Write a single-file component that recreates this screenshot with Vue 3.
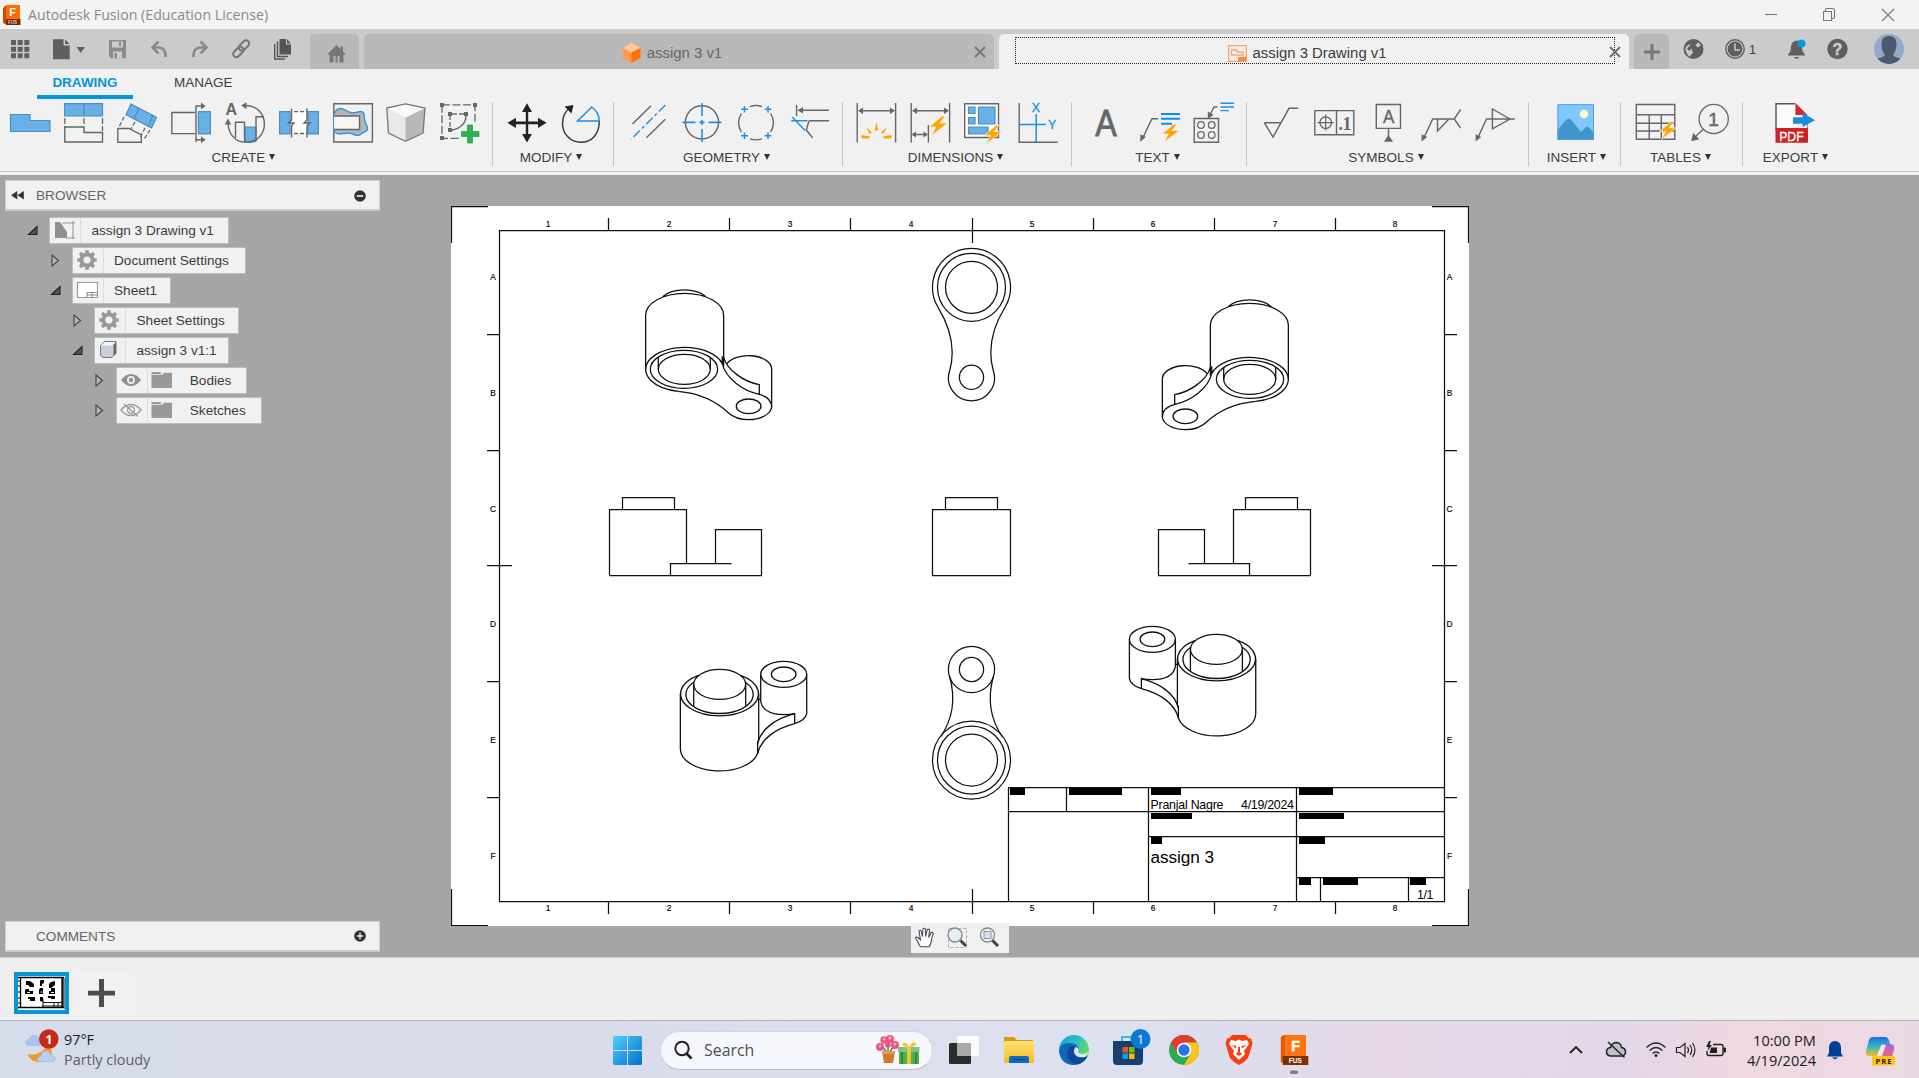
<script setup>
const G = '#666'
const line = (d, c = G, w = 1.4, extra = '') =>
  `<path d="${d}" fill="none" stroke="${c}" stroke-width="${w}" ${extra}/>`
const fill = (d, c = G, extra = '') => `<path d="${d}" fill="${c}" ${extra}/>`
const BLUE = '#69b0e6'
const EDGE = 'stroke="#4a8dc0" stroke-width="1.2"'
const LB = '#1a90ea'
const bolt = (x, y, s = 1) =>
  `<path transform="translate(${x} ${y}) scale(${s})" d="M13 0L0 11H7L2 20L19 7H11L16 0Z" fill="#ffa500" stroke="#f1f1f1" stroke-width=".8"/>`

const groups = [
  {
    name: 'CREATE', width: 493, icons: [
      fill('M.5 11.5H20V17.5H40V28.5H.5Z', BLUE, EDGE),
      fill('M.6 .6H38.5V12.8H.6ZM20 .6V12.8', BLUE, EDGE) + line('M.8 15V25M20 15V23M38.5 15V28', G, 1.3, 'stroke-dasharray="6 2"') + line('M.8 24H20V29.5H38.5V39H.8Z'),
      fill('M14 1L39.5 14.3L34.5 25L9 11.7ZM22 5L17 16M36 12.6L31 23.6', BLUE, EDGE) + line('M.8 25.5H12L24.3 32V39.2H.8Z') + line('M7 14L2.5 23M18 19L14 26M33 27L26.5 37M28 25L23 35', G, 1.3, 'stroke-dasharray="4 2"'),
      line('M24 9.5H.8V30.6H24') + line('M25 39V3H31M25 36.7H31') + fill('M30 -.5L34.5 3L30 6.5ZM30 33.2L34.5 36.7L30 40.2Z') + fill('M27.4 8.6H39.4V30.9H27.4Z', BLUE, EDGE),
      '<text x=".4" y="11.8" font-size="16" font-weight="bold" fill="#666" font-family="Liberation Sans">A</text>' + fill('M20 24H31V38.5L25 39.5L20 38.5Z', BLUE, EDGE) + line('M20 2.6C32 2 39.3 11 39.4 21C39.4 31 32 39.3 21 39.3C10 39.3 3 31 3 19') + line('M10.5 35V19.3H19.5V38.5M31 37V13.7H39') + fill('M16 2.6L21.5 -.8V6ZM3 15.5L-.3 21.5H6.2Z'),
      fill('M.6 8.6H11V30.9H.6ZM29 8.6H39.4V30.9H29Z', BLUE, EDGE) + fill('M14 9H27V30H14Z', '#fff') + line('M15 8.7H28M15 30.5H28', G, 1.3, 'stroke-dasharray="4 2"') + line('M12.5 5.5V17L9.5 20L15 20L12.5 23V34.5M28 5.5V17L25 20H31L28 23V34.5'),
      line('M.8 .8H39.4V39H.8Z') + '<path d="M1 11C5 2 10 6 16 9C22 12 29 5 31 11C32 16 30 16 34 23C36 29 32 28 28 31C24 35 21 30 15 30C9 30 4 33 1 28Z" fill="#b6b6b6" stroke="#2b95e6" stroke-width="1.4"/>' + '<path d="M1 13H26.5V26.5H1" fill="#f6f6f6" stroke="#666" stroke-width="1.4"/>',
      '<path d="M19.5 .8L39 5V29L19.5 38.3L1.5 29L.8 5Z" fill="#e9e9e9"/><path d="M19.5 14.5L39 5L37 30L19.5 38.3Z" fill="#b9b9b9"/><path d="M19.5 .8L39 5L19.5 14.5L.8 5Z" fill="#fafafa"/>' + line('M19.5 .8L39 5L37 30L19.5 38.3L2.5 30L.8 5Z', '#777', 1.3),
      line('M2 1.8H35V20M2 1.8V35.3H21', G, 1.3, 'stroke-dasharray="8 2.5"') + fill('M0 0H4V4H0ZM33 0H37V4H33ZM0 33H4V37H0ZM8 9H12V13H8ZM24 9H28V13H24ZM8 25H12V29H8Z') + line('M10 12V26M12 11H24', G, 1.3, 'stroke-dasharray="5 2"') + line('M26 13C26 20 20 26 12 27', G) + fill('M27.5 22H32.5V28.5H39V33.5H32.5V40H27.5V33.5H21.500V28.5H27.5Z', '#29b34e', 'stroke="#1f9c40" stroke-width=".7"'),
    ],
  },
  {
    name: 'MODIFY', width: 121, icons: [
      fill('M20 .3L25 9H21.2V18.5H31V14.7L39.6 19.8L31 25V21.2H21.2V31H25L20 39.6L15 31H18.8V21.2H9V25L.4 19.8L9 14.7V18.5H18.8V9H15Z', '#222'),
      line('M10 4.5C4 8 1.5 14 1.5 20.5C1.5 31 9.5 39.3 20 39.3C30.5 39.3 38.3 31.5 38.3 18', '#333', 1.4) + fill('M12.5 2L3.5 3.5L10.5 10.5Z', '#222') + line('M30.8 4L16.5 18H38.3C38 11.5 35 7 30.8 4Z', LB, 1.5),
    ],
  },
  {
    name: 'GEOMETRY', width: 229, icons: [
      line('M24 2.7L5.5 21M38.3 16.3L19.4 34.7') + line('M38.3 2L4.2 36.3', LB, 1.4, 'stroke-dasharray="9 3 3 3"'),
      line('M21 2.8A16.6 16.6 0 1 1 20.9 2.8Z') + line('M21 0V13M21 26V39M1.5 19.4H14.5M27.5 19.4H40.5M21 17V22M18.5 19.4H23.5', LB, 1.6),
      line('M15 3.6A17.3 17.3 0 0 1 27 3.6M35.6 10.5A17.5 17.5 0 0 1 35.6 29M27 35.8A17.3 17.3 0 0 1 15 35.8M6.4 29A17.5 17.5 0 0 1 6.4 10.5') + line('M9.5 3V9.6M6 6.3H13M33 3V9.6M29.6 6.3H36.4M9.5 29.4V36M6 32.7H13M33 29.4V36M29.6 32.7H36.4', LB, 1.5),
      line('M7.6 2V13.3M10 7.3H40M20 17.7H40M20 17.7L17.3 27L23.6 34.7') + fill('M8.6 7.3L14 4V10.6Z') + line('M2.2 17.7H18.5M3.2 14L16 27.5', LB, 1.4),
    ],
  },
  {
    name: 'DIMENSIONS', width: 229, icons: [
      line('M1.2 0V39.5M39.6 0V39.5M4 7.7H37') + fill('M2 7.7L7 4.4V11ZM39 7.7L34 4.4V11Z') + fill('M20.5 19L22.3 27.5H18.7ZM10 24L16 29.5L13.5 31ZM31 24L25 29.5L27.5 31ZM5.5 32L14 33.4L13 35.5H5.5ZM35.5 32L27 33.4L28 35.5H35.5Z', '#ffa500'),
      line('M1.2 0V39.5M39.6 0V39.5M18.4 22V39.5M4 7.7H37M4 31.5H16') + fill('M2 7.7L7 4.4V11ZM39 7.7L34 4.4V11ZM1.5 31.5L6 28.5V34.5ZM18 31.5L13.5 28.5V34.5Z') + bolt(19, 13),
      '<path d="M.7 .7H34.5V34.5H.7Z" fill="#fff" stroke="#666" stroke-width="1.4"/>' + fill('M4.5 4H11V10.5H4.5ZM14.5 4H31V21H14.5ZM4.5 14.5H11V21H4.5ZM4.5 24H24V31H4.5Z', BLUE, EDGE) + bolt(20, 22, .95),
      line('M1.2 0V39.2H39.6') + line('M18.2 11V39M1.5 21.5H28', LB, 1.5) + '<text x="13.8" y="9" font-size="12.5" fill="#1a90ea" stroke="#1a90ea" stroke-width=".3" font-family="Liberation Sans">X</text><text x="30" y="26" font-size="12.5" fill="#1a90ea" stroke="#1a90ea" stroke-width=".3" font-family="Liberation Sans">Y</text>',
    ],
  },
  {
    name: 'TEXT', width: 175, icons: [
      '<text x="10.2" y="33.2" font-size="36" textLength="21.5" lengthAdjust="spacingAndGlyphs" fill="#666" stroke="#666" stroke-width=".8" font-family="Liberation Sans">A</text>',
      line('M19 15.7H13L4 34.5') + fill('M1.3 38.7V31.2L6.8 34Z') + line('M22 11H41M22 15.7H41M22 20.8H33', '#0a90f0', 2) + bolt(23, 21, .92),
      line('M1.2 15.5H25.5V39.2H1.2Z') + [[8, 22], [18.7, 22], [8, 32], [18.7, 32]].map(([x, y]) => `<circle cx="${x}" cy="${y}" r="3.3" fill="none" stroke="#666" stroke-width="1.3"/>`).join('') + line('M24.5 4H21L17.5 11') + fill('M14.8 15.8V8.5L20.5 12Z') + line('M27.5 0.2H41M27.5 4H41M27.5 7.6H36', LB, 1.4),
    ],
  },
  {
    name: 'SYMBOLS', width: 282, icons: [
      line('M4.3 19.7H21.4M4.3 19.7L13 34L29 5.3H38.3'),
      line('M.8 7.6H39.8V31.8H.8ZM22.5 7.6V31.8') + '<circle cx="11.7" cy="19.6" r="5.8" fill="none" stroke="#666" stroke-width="1.3"/>' + line('M11.7 11.5V27.5M3.6 19.6H19.8', G, 1.2) + '<text x="24.6" y="26.5" font-size="18" font-weight="bold" textLength="13" fill="#666" font-family="Liberation Serif">.1</text>',
      line('M8.3 1.5H32.5V25.4H8.3ZM20.5 25.4V33') + fill('M20.5 32L25 38.7H16Z') + '<text x="15" y="20.4" font-size="19" textLength="11.3" lengthAdjust="spacingAndGlyphs" fill="#666" stroke="#666" stroke-width=".4" font-family="Liberation Sans">A</text>',
      line('M2.8 35L11.7 16H33.3L39.6 6.5M33.3 16L39.6 25.2M16.5 16V28L28 16') + fill('M.6 38.5V31.2L6.2 34Z'),
      line('M2.8 35L11.5 16H39.8M17.4 6L35 16L17.4 25.8Z') + fill('M.6 38.5V31.2L6.2 34Z'),
    ],
  },
  {
    name: 'INSERT', width: 92, icons: [
      fill('M1.5 1.2H38V36.8H1.5Z', '#80c8ff') + '<circle cx="28" cy="11" r="4.2" fill="#fdfdd8" stroke="#e8e8a0" stroke-width=".6"/>' + fill('M1.5 27L10 17Q12.8 14.5 15.5 17L25 29L29.5 24.5Q31.5 23 33.5 25L38 30V36.8H1.5Z', '#4095cf') + line('M2 1.7H37.5V36.3H2Z', '#4e9fd6', 1),
    ],
  },
  {
    name: 'TABLES', width: 122, icons: [
      line('M1.3 1.5H39.8V36.3H1.3ZM1.3 11.7H39.8M1.3 20.3H39.8M1.3 28H39.8M14.2 11.7V36.3M26.3 11.7V36.3') + bolt(24.5, 18.5, .9),
      '<circle cx="24.7" cy="16" r="14.6" fill="none" stroke="#666" stroke-width="1.3"/>' + line('M14.5 26L6 34') + fill('M2.3 38.3L4 30L10.3 36.3Z') + '<text x="19.3" y="23" font-size="19" fill="#666" stroke="#666" stroke-width=".5" font-family="Liberation Sans">1</text>',
    ],
  },
  {
    name: 'EXPORT', width: 101, icons: [
      '<path d="M2 .7H21V26H2Z" fill="#fbfbfb"/>' + line('M2 27V.7H21', '#555', 1.4) + fill('M21.5 0L33.5 12H21.5Z', '#d2282a') + fill('M1.5 25H34V39.7H1.5Z', '#cf2226') + line('M33.5 20V25', '#999', 1.2) + fill('M19 14.2H28.5V9.4L41 17.2L28.5 24V20.8H19Z', '#1a8de0') + '<text x="5.2" y="37.5" font-size="13.5" textLength="24.5" lengthAdjust="spacingAndGlyphs" fill="#fff" stroke="#fff" stroke-width=".3" font-family="Liberation Sans">PDF</text>',
    ],
  },
]

const tree = [
  { label: 'assign 3 Drawing v1', indent: 50, width: 177.5, open: true, icons: ['drawing'] },
  { label: 'Document Settings', indent: 72.5, width: 172.3, open: false, icons: ['gear'] },
  { label: 'Sheet1', indent: 72.5, width: 97.3, open: true, icons: ['sheet'] },
  { label: 'Sheet Settings', indent: 95, width: 142.5, open: false, icons: ['gear'] },
  { label: 'assign 3 v1:1', indent: 95, width: 132.5, open: true, icons: ['body'] },
  { label: 'Bodies', indent: 117.3, width: 128.5, open: false, icons: ['eye', 'folder'] },
  { label: 'Sketches', indent: 117.3, width: 143.7, open: false, icons: ['hidden', 'folder'] },
]

const treeIcons = {
  drawing: '<path d="M2 2H7L14 12V18H2Z" fill="#8e9093"/><path d="M9 3H22M20 1V19M13 18H22" fill="none" stroke="#999" stroke-width="1.1"/>',
  gear: '<circle cx="11" cy="10" r="5.6" fill="none" stroke="#999" stroke-width="4"/><path d="M11 .3V4M11 16V19.7M1.3 10H5M17 10H20.7M4.1 3.1L6.8 5.8M15.2 14.2L17.9 16.9M17.9 3.1L15.2 5.8M6.8 14.2L4.1 16.9" stroke="#999" stroke-width="3.6" fill="none"/>',
  sheet: '<path d="M1.5 2.5H21.5V17.5H1.5Z" fill="#fff" stroke="#999" stroke-width="1.2"/><path d="M11 17V12.5H21M11 15H21M16 12.5V17" stroke="#888" fill="none"/>',
  body: '<path d="M2.5 5.5L6.5 1.5H18V13.5L14 17.5H5L2.5 15.5Z" fill="#c9cedb" stroke="#777" stroke-width="1"/><path d="M3 5.5L6.5 2H17.5L14 5.5Z" fill="#f4f6fb"/><path d="M15.500 5L18 2V13L15.500 16Z" fill="#63666c"/>',
  eye: '<path d="M1 10Q5.5 4 11 4T21 10Q16.5 16 11 16T1 10Z" fill="#8f8f8f"/><circle cx="11" cy="10" r="3.9" fill="#f1f1f1"/><circle cx="11" cy="10" r="2.2" fill="#8f8f8f"/>',
  hidden: '<path d="M1 10Q5.5 4.5 11 4.5T21 10Q16.5 15.5 11 15.5T1 10Z" fill="none" stroke="#999" stroke-width="1.3"/><circle cx="11" cy="10" r="3.4" fill="none" stroke="#999" stroke-width="1.2"/><path d="M4 4L18 16.5" stroke="#999" stroke-width="1.3"/>',
  folder: '<path d="M.5 2H9L11 4.2H.5ZM.5 5H11L13 2.8H21V18H.5Z" fill="#999"/>',
}

const cols = [[548, 1], [669, 2], [790, 3], [911, 4], [1032, 5], [1153, 6], [1275, 7], [1395, 8]]
const rows = [[277, 'A'], [393, 'B'], [509, 'C'], [624, 'D'], [740, 'E'], [856, 'F']]
const fieldLabels = [
  [1010, 788, 15, 7], [1069, 788, 53, 7], [1151, 788, 30, 7], [1299, 788, 34, 7],
  [1151, 813, 41, 6], [1299, 813, 45, 6], [1151, 837, 11, 7], [1299, 837, 26, 7],
  [1299, 878, 12, 7], [1323, 878, 35, 7], [1410, 878, 16, 7],
]
</script>

<template>
  <div class="app">
    <header class="titlebar">
      <svg class="logo" width="18" height="20" viewBox="0 0 18 20">
        <path d="M1 1.5L4 0H17V20L4 19L0 18Z" fill="#ff6b00" />
        <path d="M0 3L3 1V19L0 18Z" fill="#c74d00" />
        <path d="M3 14H17.5V20H3Z" fill="#6b2c00" />
        <text x="6.2" y="11" font-size="11" font-weight="bold" fill="#fff" font-family="Liberation Sans">F</text>
        <text x="5" y="18.8" font-size="4.5" font-weight="bold" fill="#e8c8b0" font-family="Liberation Sans">FUS</text>
      </svg>
      <span class="title">Autodesk Fusion (Education License)</span>
      <svg class="wincontrols" width="132" height="16" viewBox="0 0 132 16" fill="none" stroke="#777" stroke-width="1.1">
        <path d="M0 7.5H12" />
        <path d="M58.5 4.5H66.5V13.5H58.5ZM60.5 4.5V2.5Q60.5 1.5 62 1.5H67.5Q69.5 1.5 69.5 3.5V10Q69.5 11.5 68 11.5H66.5" />
        <path d="M117 2L129 14M129 2L117 14" />
      </svg>
    </header>

    <nav class="tabbar">
      <svg class="quick" width="310" height="40" viewBox="0 29 310 40">
        <path d="M11 40H16V45H11ZM17.7 40H22.7V45H17.7ZM24.3 40H29.3V45H24.3ZM11 46.7H16V51.7H11ZM17.7 46.7H22.7V51.7H17.7ZM24.3 46.7H29.3V51.7H24.3ZM11 53.3H16V58.3H11ZM17.7 53.3H22.7V58.3H17.7ZM24.3 53.3H29.3V58.3H24.3Z" fill="#5f5f5f" />
        <path d="M53 39.3H63.5V45.5H69.7V59.3H53ZM65 39.3L69.7 44H65Z" fill="#5f5f5f" />
        <path d="M76.5 47H85L80.7 53Z" fill="#5f5f5f" />
        <path d="M109 40H126V58.3H111L109 56Z" fill="#8b8b8b" />
        <path d="M112 41.5H123V47.5H112ZM113 51.5H122V58H113Z" fill="#ccc" />
        <path d="M119 42H121V46H119ZM114.5 53H117V58H114.5Z" fill="#8b8b8b" />
        <g fill="none" stroke="#8b8b8b" stroke-width="2.6">
          <path d="M158.5 41.5L152.5 47.5L158.5 53.5M153 47.5H159Q166 48 165.5 57" />
          <path d="M200.5 41.5L206.5 47.5L200.5 53.5M206 47.5H200Q193 48 193.5 57" />
        </g>
        <g fill="none" stroke="#777" stroke-width="2">
          <rect x="-6" y="-3.2" width="12" height="6.4" rx="3.2" transform="translate(244 45.5) rotate(-45)" />
          <rect x="-6" y="-3.2" width="12" height="6.4" rx="3.2" transform="translate(238.3 52) rotate(-45)" />
        </g>
        <path d="M279.5 39H286V44.5H291V54.5H279.5ZM287 39L291 43.5H287Z" fill="#555" />
        <path d="M277.5 41.5V56.5H288M274.7 44V59H285" fill="none" stroke="#555" stroke-width="1.4" />
      </svg>
      <div class="tab home">
        <svg width="20" height="18" viewBox="0 0 20 18"><path d="M0 9.5L9.5 0L13.5 4V1.5H16V6.5L19 9.5H16.5V17.5H12.5V11H10.5V17.5H8.5V11H6.5V17.5H2.5V9.5Z" fill="#777" /></svg>
      </div>
      <div class="tab doc">
        <svg width="19" height="20" viewBox="0 0 19 20"><path d="M9.5 0L18.5 5V15L9.5 20L.5 15V5Z" fill="#ff9a4d" /><path d="M9.5 0L18.5 5L9.5 9.5L.5 5Z" fill="#ffc79c" /><path d="M18.5 5V15L9.5 20V9.5Z" fill="#ff7010" /></svg>
        <span>assign 3 v1</span>
        <svg class="close" width="12" height="12" viewBox="0 0 12 12"><path d="M1 1L11 11M11 1L1 11" stroke="#777" stroke-width="1.9" /></svg>
      </div>
      <div class="tab doc active">
        <div class="focus">
          <svg width="19" height="17" viewBox="0 0 19 17"><path d="M.7 .7H18.3V16.3H.7Z" fill="none" stroke="#f9a56b" stroke-width="1.3" /><path d="M3.5 5H9V7H15V10H3.5Z" fill="none" stroke="#f9a56b" stroke-width="1.3" /><path d="M10 12H18.5V16.5H10Z" fill="#ff8b3d" /></svg>
          <span>assign 3 Drawing v1</span>
        </div>
        <svg class="close" width="12" height="12" viewBox="0 0 12 12"><path d="M1 1L11 11M11 1L1 11" stroke="#707070" stroke-width="1.9" /></svg>
      </div>
      <div class="tab plus"><svg width="16" height="16" viewBox="0 0 16 16"><path d="M6.5 0H9.5V6.5H16V9.5H9.5V16H6.5V9.5H0V6.5H6.5Z" fill="#777" /></svg></div>
      <svg class="status" width="250" height="40" viewBox="1669 29 250 40">
        <circle cx="1693.5" cy="49" r="9" fill="none" stroke="#5f5f5f" stroke-width="2" />
        <path d="M1684 49A9.500 9.500 0 0 1 1693.500 39.500L1699 41.500L1695.500 45L1697.500 47.500L1702.500 44.500L1703 49A9.500 9.500 0 0 1 1698 57.500L1691 58.300L1688 56L1692 51.500V48.500L1689 51L1687 48.500L1691 44.500L1688 45Z" fill="#5f5f5f" />
        <path d="M1688.500 56L1692.500 51.500" stroke="#ccc" stroke-width="2.200" />
        <circle cx="1735" cy="49" r="9.2" fill="none" stroke="#5f5f5f" stroke-width="1.4" />
        <circle cx="1735" cy="49" r="7.4" fill="#5f5f5f" />
        <path d="M1735 43.5V50H1740" fill="none" stroke="#ccc" stroke-width="1.5" />
        <text x="1748.8" y="54" font-size="13.5" fill="#444" font-family="Liberation Sans">1</text>
        <path d="M1788 54.5Q1791 52 1791 46.5Q1791.5 41.5 1796.5 40.5Q1801.5 41.5 1802 46.5Q1802 52 1805 54.5V55.5H1788ZM1793.5 57H1799.5Q1796.5 60.5 1793.5 57Z" fill="#5f5f5f" />
        <circle cx="1801.5" cy="43.5" r="4" fill="#0a96e0" />
        <circle cx="1837.5" cy="49" r="10.2" fill="#5f5f5f" />
        <text x="1832.600" y="55" font-size="16" font-weight="bold" fill="#ccc" stroke="#ccc" stroke-width=".5" font-family="Liberation Sans">?</text>
        <clipPath id="avatar"><circle cx="1889" cy="49" r="15" /></clipPath>
        <g clip-path="url(#avatar)">
          <path d="M1874 34H1904V64H1874Z" fill="#93a7c6" />
          <path d="M1889 36Q1897 36 1896.5 45Q1895.5 53 1893 54.5Q1894 57.5 1901 58.5V65H1877V58.5Q1884 57.5 1885 54.5Q1882 52 1881.5 45Q1881 36 1889 36Z" fill="#4c5a70" />
        </g>
      </svg>
    </nav>

    <section class="ribbon">
      <div class="ribbon-tabs"><b>DRAWING</b><span>MANAGE</span></div>
      <div class="groups">
        <div v-for="g in groups" :key="g.name" class="group" :class="g.name.toLowerCase()" :style="{ width: g.width + 'px' }">
          <div class="icons">
            <svg v-for="(icon, i) in g.icons" :key="i" width="40" height="40" viewBox="0 0 40 40" v-html="icon" />
          </div>
          <div class="label">{{ g.name }}<i></i></div>
        </div>
      </div>
    </section>

    <main class="workspace">
      <aside>
        <div>
          <div class="panel">
            <svg width="13" height="9" viewBox="0 0 13 9"><path d="M6.3 0V8.5L0 4.3ZM12.8 0V8.5L6.5 4.3Z" fill="#333" /></svg>
            <span>BROWSER</span>
            <svg class="toggle" width="12" height="12" viewBox="0 0 12 12"><circle cx="6" cy="6" r="5.8" fill="#333" /><path d="M2.8 6H9.2" stroke="#f1f1f1" stroke-width="1.7" /></svg>
          </div>
          <ul class="tree">
            <li v-for="n in tree" :key="n.label" :style="{ paddingLeft: n.indent - 28 + 'px' }">
              <svg class="arrow" width="11" height="13" viewBox="0 0 11 13">
                <path v-if="n.open" d="M10 2.5V10.5H1.500Z" fill="#555" stroke="#222" stroke-width="1.1" />
                <path v-else d="M2 1L8.5 6.5L2 12Z" fill="#b4b4b4" stroke="#444" stroke-width="1.1" />
              </svg>
              <div class="node" :style="{ width: n.width + 'px' }">
                <span v-for="(ic, k) in n.icons" :key="k" class="cell"><svg width="22" height="20" viewBox="0 0 22 20" v-html="treeIcons[ic]" /></span>
                <span class="name">{{ n.label }}</span>
              </div>
            </li>
          </ul>
        </div>
        <div class="panel comments">
          <span>COMMENTS</span>
          <svg class="toggle" width="12" height="12" viewBox="0 0 12 12"><circle cx="6" cy="6" r="5.8" fill="#333" /><path d="M2.8 6H9.2M6 2.8V9.2" stroke="#f1f1f1" stroke-width="1.5" /></svg>
        </div>
      </aside>

      <svg class="sheet" width="1018" height="720" viewBox="451 206 1018 720" fill="none" stroke="#111" stroke-width="1.25">
        <defs>
          <g id="iso-below" transform="scale(.33333) translate(-733 0)" stroke-width="3.9">
            <path d="M617 523V361A117 66 0 0 1 851 361V512M668 305A78 45 0 0 1 798 305" />
            <path d="M715 589Q660 584 632 556Q617 540 617 523A117 66 0 0 1 847 506V484" />
            <path d="M847 506C858 552 910 588 958 598V569C910 560 862 525 851 487" />
            <path d="M958 598Q995 608 995 636A70 40 0 0 1 925 674Q888 674 866 654C830 620 785 595 715 589" />
            <ellipse cx="732" cy="523" rx="101" ry="57" />
            <ellipse cx="733" cy="523" rx="78" ry="45" />
            <ellipse cx="926" cy="634" rx="37" ry="22" />
            <path d="M655 487V523M811 487V523M860 507A70 40 0 0 1 995 520V636" />
          </g>
          <g id="iso-above" transform="scale(.33333) translate(-839 0)" stroke-width="3.9">
            <ellipse cx="839" cy="373" rx="78" ry="45" />
            <path d="M775 346A117 66 0 1 0 902 346M761 367A101 57 0 1 0 916 367" />
            <path d="M761 373V438M917 373V438M721 403V567A117 66 0 0 0 953 579M956 403V540L953 545V580M956 418H962" />
            <ellipse cx="1031" cy="343" rx="69" ry="39" />
            <ellipse cx="1031" cy="343" rx="37" ry="22" />
            <path d="M962 343V425Q970 464 1031 464Q1048 464 1064 461V491M1100 343V461Q1096 481 1064 491" />
            <path d="M953 550C963 505 1010 475 1064 461M953 580C963 535 1010 505 1064 491" />
          </g>
          <path id="side" d="M609.5 575.5V509.5H686.5V563.5M622.5 509.5V497.5H674.5V509.5M715.5 563.5V529.5H761.5V575.5H609.5M670.5 575.5V563.5H731.5" />
        </defs>
        <path d="M451.5 243V206.5H488M1432 206.5H1468.5V243M451.5 889V925.5H488M1432 925.5H1468.5V889" />
        <path d="M499.5 230.5H1444.5V901.5H499.5Z" />
        <path d="M608.5 218V230M729.5 218V230M850.5 218V230M972.5 218V243M1093.5 218V230M1214.5 218V230M1335.5 218V230" />
        <path d="M608.5 902V914M729.5 902V914M850.5 902V914M972.5 889V914M1093.5 902V914M1214.5 902V914M1335.5 902V914" />
        <path d="M487 334.5H499M487 450.5H499M487 565.5H512M487 681.5H499M487 797.5H499" />
        <path d="M1445 334.5H1457M1445 450.5H1457M1432 565.5H1457M1445 681.5H1457M1445 797.5H1457" />
        <g class="zones">
          <text v-for="c in cols" :key="'t' + c[1]" :x="c[0]" y="227.2">{{ c[1] }}</text>
          <text v-for="c in cols" :key="'b' + c[1]" :x="c[0]" y="911.2">{{ c[1] }}</text>
          <text v-for="r in rows" :key="'l' + r[1]" x="493" :y="r[0] + 3">{{ r[1] }}</text>
          <text v-for="r in rows" :key="'r' + r[1]" x="1449.6" :y="r[0] + 3">{{ r[1] }}</text>
        </g>

        <use href="#iso-below" transform="translate(684.3 195)" />
        <use href="#iso-below" transform="translate(1249.7 205) scale(-1 1)" />
        <use href="#iso-above" transform="translate(719.7 560)" />
        <use href="#iso-above" transform="translate(1216.4 525) scale(-1 1)" />
        <use href="#side" />
        <use href="#side" transform="translate(1920 0) scale(-1 1)" />
        <path d="M932.5 509.5H1010.5V575.5H932.5ZM945.5 509.5V497.5H997.5V509.5" />

        <g transform="translate(971.5 287.3)">
          <path d="M-33.5 20A39 39 0 1 1 33.5 20C20 42 16 62 21.7 83A23 23 0 1 1 -21.7 83C-16 62 -20 42 -33.5 20Z" />
          <circle r="34" /><circle r="26" /><circle cy="90" r="12.1" />
        </g>
        <g transform="translate(971.5 760)">
          <circle r="39" /><circle r="34" /><circle r="26" />
          <circle cy="-90.5" r="23.1" /><circle cy="-90.5" r="12.1" />
          <path d="M-21.7 -83C-16 -62 -18 -42 -31 -23M21.7 -83C16 -62 18 -42 31 -23" />
        </g>

        <path d="M1008.5 901.5V787.5H1444.5M1066.5 787.5V811.5M1008.5 811.5H1444.5M1148.5 787.5V901.5M1296.5 787.5V901.5M1148.5 836.5H1444.5M1296.5 877.5H1444.5M1320.5 877.5V901.5M1408.5 877.5V901.5" />
        <g fill="#000" stroke="none">
          <rect v-for="(f, i) in fieldLabels" :key="i" :x="f[0]" :y="f[1]" :width="f[2]" :height="f[3]" />
        </g>
        <g class="fields">
          <text x="1150.5" y="809" textLength="73">Pranjal Nagre</text>
          <text x="1241" y="809" textLength="53">4/19/2024</text>
          <text class="big" x="1150.500" y="862.7" textLength="63.5">assign 3</text>
          <text x="1417" y="898.7" textLength="16.5">1/1</text>
        </g>
      </svg>

      <div class="navtools">
        <svg width="98" height="30" viewBox="0 0 98 30" fill="none">
          <path d="M8.5 22.5Q7.5 19 4.5 15Q5 13.5 7 14.5L9.5 17L8 8Q9 6.5 10.2 8L11.5 13.5L12 6Q13.3 4.5 14.5 6L14.7 13.5L16.3 6.5Q17.8 5.5 18.6 7L17.7 14.5L20.3 9.5Q21.8 9 22.3 10.5Q20.5 15 20.5 18Q19.5 21.5 18.2 23.8H10Z" fill="#fff" stroke="#444c5a" stroke-width="1.1" />
          <path d="M37.5 5.5H55.5V24.5H37.5Z" stroke="#aaa" stroke-dasharray="3 2" />
          <circle cx="44" cy="12" r="7" fill="#e4eff1" stroke="#888" stroke-width="1.3" /><path d="M49.5 17.5L55 23" stroke="#444" stroke-width="3" />
          <circle cx="76.5" cy="12" r="7" fill="#eef2f5" stroke="#888" stroke-width="1.3" /><path d="M73 8.5H80V15.5H73Z" fill="#dde1ee" stroke="#8890a8" /><path d="M81.500 17.500L87 23" stroke="#444" stroke-width="3" />
        </svg>
      </div>
    </main>

    <section class="sheets">
      <div class="thumb">
        <svg width="47" height="34" viewBox="0 0 47 34">
          <path d="M0 0H47V34H0Z" fill="#fff" />
          <path d="M0 1.5H46M2.5 1V32M0 31.5H46" stroke="#000" stroke-width="1.3" />
          <path d="M0 5H2M0 10H2M0 16H2M0 22H2M0 27H2" stroke="#000" />
          <path d="M44.5 2V31" stroke="#111" stroke-width="2.400" /><path d="M46.5 2V33" stroke="#888" />
          <path d="M8 5H12L16 8V11H12L10 9H8ZM23 4H26V7L24 8V10H22V5ZM33 6L37 5V9L33 12H31V8ZM8 13H11V15H15V18H7V14ZM22 12H25V18H21V14ZM33 12H37V18H31V15H33ZM10 21H17V25H12V23H10ZM22 21H25V26L22 25ZM30 20H37V23H33V22H30Z" fill="#000" />
          <path d="M9 16.500H12M22.500 16H24.500M33 16.5H36" stroke="#fff" stroke-width="1.2" />
          <path d="M25 26.5H44M25 23V31M36 26.5V31M24 30H44M40 27V31" stroke="#111" stroke-width="1" />
        </svg>
      </div>
      <div class="addsheet"><svg width="27" height="28" viewBox="0 0 27 28"><path d="M11 0H16V11.7H27V16.5H16V28H11V16.5H0V11.7H11Z" fill="#4d4d4d" /></svg></div>
    </section>

    <footer class="taskbar">
      <svg class="weather" width="35" height="38" viewBox="25 1027 35 38">
        <path d="M27.5 1053Q39 1056 47 1045Q54 1048 51 1055Q46 1061.500 38 1061Q30 1060 27.5 1053Z" fill="#f39a2b" />
        <path d="M28 1045Q24 1043 26 1040Q27 1038 29 1038Q30 1034 34 1034Q38 1034 40 1038V1045Z" fill="#a9c2ee" />
        <path d="M40 1060.500Q36 1060 38 1056.5Q39 1055 41 1055Q42 1050 46 1050Q50 1050 51 1054.5Q55 1055 55 1057.500Q55 1060.500 52 1060.500Z" fill="#b9cff5" stroke="#91aee6" stroke-width=".6" />
        <circle cx="48.8" cy="1038" r="9.8" fill="#c42b1c" />
        <text x="45.5" y="1042.5" font-size="12" font-weight="bold" fill="#fff" font-family="Open Sans, sans-serif">1</text>
      </svg>
      <div class="temp"><span>97°F</span><em>Partly cloudy</em></div>

      <svg class="start" width="29" height="29" viewBox="0 0 29 29">
        <defs><linearGradient id="win" x2="1" y2="1"><stop offset="0" stop-color="#4fd0ff" /><stop offset="1" stop-color="#0070c8" /></linearGradient></defs>
        <path d="M1 0H14V14H0V1ZM15 0H28L29 1V14H15ZM0 15H14V29H1L0 28ZM15 15H29V28L28 29H15Z" fill="url(#win)" />
      </svg>
      <div class="search">
        <svg width="20" height="20" viewBox="0 0 20 20" fill="none" stroke="#222" stroke-width="2"><circle cx="9" cy="8.5" r="6.7" /><path d="M13.5 13.5L18.5 18.5" stroke-width="2.6" /></svg>
        <span>Search</span>
        <svg class="gift" width="44" height="30" viewBox="0 0 44 30">
          <path d="M11 18L5 9M12 18V6M13 18L19 9" stroke="#3c8a3c" stroke-width="1.5" />
          <g fill="#e8557f"><circle cx="8" cy="5" r="3.7" /><circle cx="14" cy="4" r="4" /><circle cx="4" cy="12" r="4" /><circle cx="19" cy="10" r="4" /><circle cx="12" cy="10" r="2.8" /></g>
          <g fill="#f9a8c0"><circle cx="8" cy="4" r="1.5" /><circle cx="14" cy="3" r="1.7" /><circle cx="4" cy="11" r="1.5" /><circle cx="19" cy="9" r="1.5" /></g>
          <path d="M6 16H19L17 28H8Z" fill="#d07830" /><path d="M6 16H19V19H6.5Z" fill="#e89850" />
          <path d="M23 14H43V29H23Z" fill="#4caf50" /><path d="M22 12H43.5V17H22Z" fill="#7bc67e" />
          <path d="M26 17V29M40 17V29" stroke="#2e8b3a" stroke-width="2" />
          <path d="M31 12H35V29H31ZM33 12Q24 11 27 8Q31 7 33 12Q36 6 40 8Q41 12 33 12Z" fill="#f4c430" />
        </svg>
      </div>

      <svg class="apps" width="380" height="58" viewBox="940 1020 380 58">
        <defs>
          <linearGradient id="fold" x2="0" y2="1"><stop offset="0" stop-color="#ffe27a" /><stop offset="1" stop-color="#fbb91a" /></linearGradient>
          <linearGradient id="edge" x1="0" y1="0" x2="1" y2=".4"><stop offset="0" stop-color="#1a9fe0" /><stop offset=".6" stop-color="#2ac0c0" /><stop offset="1" stop-color="#66dd60" /></linearGradient>
        </defs>
        <rect x="949" y="1043" width="22" height="21" rx="1.5" fill="#2b2b2b" />
        <rect x="957" y="1036" width="22" height="20" rx="1.5" fill="#fff" opacity=".85" />
        <path d="M957 1043H971V1056H957Z" fill="#aaa" />
        <path d="M1004 1038Q1004 1037 1005 1037H1014L1017 1040H1033V1046H1004Z" fill="#dc9a08" />
        <rect x="1004" y="1041" width="30" height="22" rx="1.5" fill="url(#fold)" />
        <path d="M1009 1063V1058Q1009 1056 1011 1056H1027Q1029 1056 1029 1058V1063Z" fill="#0f6cbd" /><path d="M1013 1059.5H1025" stroke="#0a4a85" stroke-width="1.3" />
        <circle cx="1074" cy="1050" r="15" fill="url(#edge)" />
        <path d="M1059 1050Q1061 1043 1069 1043Q1078 1043 1079 1050Q1078 1054 1080 1056Q1085 1058 1087.5 1056Q1083 1065 1073 1065Q1060 1064 1059 1050Z" fill="#1266b8" />
        <path d="M1067 1053Q1068 1064 1078 1064.3Q1085 1062 1087.5 1056Q1081 1059 1076 1056Q1072 1052 1075 1046Q1068 1045 1067 1053Z" fill="#0b4a94" />
        <path d="M1075.5 1047Q1072 1052 1076.5 1056Q1079 1058 1085 1057L1089 1052Q1080 1056 1078.5 1052Q1080 1048 1075.5 1047Z" fill="#e0e4f0" />
        <path d="M1122 1043V1037H1134V1043" fill="none" stroke="#38b8e8" stroke-width="2" />
        <path d="M1113 1041H1143V1061Q1143 1065 1139 1065H1117Q1113 1065 1113 1061Z" fill="#17406f" />
        <path d="M1122.5 1047H1128V1052.5H1122.5Z" fill="#f25022" /><path d="M1129 1047H1134.5V1052.5H1129Z" fill="#7fba00" /><path d="M1122.5 1053.5H1128V1059H1122.5Z" fill="#00a4ef" /><path d="M1129 1053.5H1134.5V1059H1129Z" fill="#ffb900" />
        <circle cx="1140.5" cy="1039" r="10" fill="#0a78d4" />
        <text x="1136.8" y="1044" font-size="13" fill="#fff" font-family="Open Sans, sans-serif">1</text>
        <circle cx="1184" cy="1050" r="15" fill="#2da94f" />
        <path d="M1171 1042.5A15 15 0 0 1 1197 1042.5H1184L1177.5 1054Z" fill="#e33b2e" />
        <path d="M1197 1042.5A15 15 0 0 1 1184 1065L1190.5 1054L1184 1042.5Z" fill="#fcc31e" />
        <circle cx="1184" cy="1050" r="7.3" fill="#fff" /><circle cx="1184" cy="1050" r="5.7" fill="#2a73e8" />
        <path d="M1232 1035H1246L1248.5 1038L1251 1038.5L1252.5 1043L1251.5 1047L1248 1058Q1245 1062 1239 1065Q1233 1062 1230 1058L1226.5 1047L1225.5 1043L1227 1038.5L1229.5 1038Z" fill="#fb3e12" />
        <path d="M1231 1040L1236 1041L1239 1039.5L1242 1041L1247 1040L1249 1044L1244 1051L1245 1054L1239 1060L1233 1054L1234 1051L1229 1044Z" fill="#fff" />
        <path d="M1231.5 1045L1236.5 1046L1236 1048.5ZM1246.5 1045L1241.5 1046L1242 1048.5ZM1238 1047H1240V1052L1242 1054L1239 1056L1236 1054L1238 1052Z" fill="#fb3e12" />
        <g transform="translate(.8 0)">
          <path d="M1280 1037L1283 1035H1305V1062L1283 1064L1280 1062Z" fill="#e05a00" /><path d="M1284 1035H1305V1056H1284Z" fill="#ff7310" /><path d="M1282 1056H1307.5V1065H1282Z" fill="#7d3200" />
          <text x="1290.5" y="1050.500" font-size="14" font-weight="bold" fill="#fff" stroke="#fff" stroke-width=".5" font-family="Liberation Sans">F</text>
          <text x="1288" y="1063" font-size="6.5" font-weight="bold" fill="#fff" font-family="Liberation Sans">FUS</text>
        </g>
        <rect x="1290" y="1070.5" width="8" height="3.5" rx="1.7" fill="#7c7c84" />
      </svg>

      <svg class="tray" width="180" height="58" viewBox="1560 1020 180 58" fill="none" stroke="#222" stroke-width="1.5">
        <path d="M1570 1053L1576 1047L1582 1053" stroke-width="1.9" />
        <path d="M1610.5 1056Q1606.5 1055.5 1606.5 1051.5Q1607 1048 1610.5 1047.5Q1612 1042.5 1616.5 1042.5Q1621 1043 1621.5 1047.5Q1625.5 1048 1625.5 1052Q1625.5 1055.5 1621.5 1056Z" fill="#c4c0c8" /><path d="M1608 1042L1624.5 1057.5" />
        <path d="M1646.5 1047.5Q1656 1038.5 1665.5 1047.5M1649.5 1050.5Q1656 1044.5 1662.5 1050.5M1652.5 1053.5Q1656 1050.5 1659.5 1053.5" stroke-width="1.3" /><circle cx="1656" cy="1055.5" r="1.5" fill="#222" stroke="none" />
        <path d="M1676.5 1047.5H1680L1685 1043.5V1056.5L1680 1052.5H1676.5ZM1687.5 1047Q1689.5 1050 1687.5 1053M1690 1045Q1693.5 1050 1690 1055M1692.5 1043Q1697.5 1050 1692.5 1057" stroke-width="1.2" />
        <path d="M1713 1044.5H1721Q1723 1044.5 1723 1046.5V1053.5Q1723 1055.5 1721 1055.5H1709Q1707 1055.5 1707 1053.5V1051" stroke-width="1.4" /><path d="M1724 1048H1725.5V1052H1724Z" fill="#222" stroke-width="1" /><path d="M1711 1047.5H1717V1053H1709.5ZM1709 1041L1706 1047H1708.5L1707.5 1051L1712 1045H1709.5L1711 1041Z" fill="#222" stroke="none" />
      </svg>
      <div class="clock"><span>10:00 PM</span><span>4/19/2024</span></div>
      <svg class="notif" width="70" height="32" viewBox="1827 1035 70 32">
        <defs><linearGradient id="cop" x2="0" y2="1"><stop offset="0" stop-color="#1a6fe0" /><stop offset=".5" stop-color="#35b5c5" /><stop offset="1" stop-color="#f3c020" /></linearGradient><linearGradient id="cop2" x2="0" y2="1"><stop offset="0" stop-color="#a45ee8" /><stop offset="1" stop-color="#f06a6a" /></linearGradient></defs>
        <path d="M1827 1056.5L1829 1053V1047.5Q1829.5 1041 1835 1041Q1840.5 1041 1841 1047.5V1053L1843 1056.5ZM1832 1057.5H1838Q1835 1061 1832 1057.5Z" fill="#003f92" />
        <path d="M1873 1037H1886Q1889 1038 1890 1044H1884Q1881 1044 1880 1048L1877 1056H1868Q1865 1055 1866 1051L1869 1040Q1870 1037 1873 1037Z" fill="url(#cop)" />
        <path d="M1885 1044H1891Q1895 1045 1894 1049L1892 1057H1878L1881 1048Q1882 1044 1885 1044Z" fill="url(#cop2)" />
        <path d="M1882 1045H1886L1882 1056H1877Z" fill="#fff" opacity=".8" />
        <rect x="1872" y="1056" width="23" height="9.5" rx="2" fill="#ffc60a" />
        <text x="1875.5" y="1063.6" font-size="7.5" font-weight="bold" textLength="16" fill="#222" font-family="Open Sans, sans-serif">PRE</text>
      </svg>
    </footer>
  </div>
</template>

<style>
body { margin: 0; overflow: hidden; }
</style>

<style scoped>
.app { width: 1919px; height: 1078px; display: flex; flex-direction: column; font-family: "Liberation Sans", Arial, sans-serif; font-size: 13.6px; color: #3c3c3c; overflow: hidden; }
svg { display: block; flex: none; }
.titlebar { height: 29px; background: #f3f3f3; display: flex; align-items: center; box-sizing: border-box; padding: 0 22px 0 3px; }
.title { margin-left: 7px; font-family: "Open Sans", sans-serif; font-size: 14.2px; color: #8a8a8a; white-space: nowrap; }
.wincontrols { margin-left: auto; }
.tabbar { height: 40px; background: #cbcbcb; display: flex; align-items: flex-end; }
.quick, .status { align-self: stretch; }
.tab { height: 35px; background: #b9b9b9; border-radius: 5px 5px 0 0; display: flex; align-items: center; justify-content: center; box-sizing: border-box; }
.home { width: 49px; margin-right: 5px; padding: 5px 0 0 4px; }
.doc { width: 630px; margin-right: 5px; position: relative; font-size: 14.9px; color: #666; gap: 6px; padding: 3px 14px 0 0; }
.doc .close { position: absolute; right: 8px; top: 12px; }
.active { width: 630px; background: #f1f1f1; color: #3c3c3c; padding: 0; justify-content: flex-start; align-items: flex-start; }
.focus { margin: 3px 0 0 16px; width: 600px; height: 27px; box-sizing: border-box; border: 1px dotted #222; display: flex; align-items: center; justify-content: center; gap: 5px; padding: 5px 15px 0 0; }
.plus { width: 35px; margin-left: 0; }
.ribbon { height: 106px; background: #f1f1f1; box-sizing: border-box; border-bottom: 3px solid #f1f1f1; box-shadow: inset 0 -1px #c6c6c6; position: relative; display: flex; flex-direction: column; }
.ribbon-tabs { display: flex; height: 33px; padding-left: 37px; align-items: flex-start; font-size: 13.5px; }
.ribbon-tabs b { width: 96px; height: 30px; box-sizing: border-box; border-bottom: 4px solid #0696d7; color: #0696d7; text-align: center; line-height: 28px; }
.ribbon-tabs span { margin-left: 41px; line-height: 28px; }
.groups { display: flex; height: 64px; }
.group { box-sizing: border-box; border-right: 1px solid #c4c4c4; display: flex; flex-direction: column; align-items: center; }
.group.create { padding-right: 2px; }
.group.modify { padding-left: 2px; }
.group.modify .label { left: -3px; }
.group.insert { padding-left: 2px; }
.group.insert .label { left: 1px; }
.group.tables { padding-left: 1px; }
.group.export { border-right: 0; }
.group.export .label { left: 2px; }
.icons { display: flex; gap: 13.8px; padding-top: 1px; }
.icons svg { overflow: visible; }
.label { font-size: 13.5px; line-height: 16px; margin-top: 7px; display: flex; align-items: center; gap: 4px; white-space: nowrap; position: relative; left: -1.5px; }
.label i { border: 3.5px solid transparent; border-top: 6px solid #333; border-bottom: 0; margin-bottom: 2px; }
.workspace { height: 782px; background: #a5a5a5; position: relative; display: flex; }
aside { width: 451px; box-sizing: border-box; padding: 5px; display: flex; flex-direction: column; justify-content: space-between; }
.panel { width: 375px; height: 31px; box-sizing: border-box; background: #f1f1f1; border: 1px solid #cfcfcf; border-bottom: 2px solid #c9c9c9; display: flex; align-items: center; padding: 1px 13.5px 0 5px; color: #666; }
.panel span { margin-left: 12px; }
.panel .toggle { margin-left: auto; }
.comments { padding-top: 0; }
.comments span { margin-left: 25px; }
.tree { list-style: none; margin: 6.5px 0 0; padding: 0; }
.tree li { display: flex; align-items: center; height: 25px; margin-bottom: 5px; }
.tree .arrow { margin-right: 12px; }
.node { height: 25px; background: #f1f1f1; display: flex; align-items: center; white-space: nowrap; box-shadow: 0 0 0 .5px #d5d5d5; }
.cell { width: 31px; height: 25px; display: flex; align-items: center; padding-left: 3px; box-sizing: border-box; border-right: 1px solid #ddd; }
.cell + .cell { border: 0; }
.name { margin-left: 10.5px; padding-top: 1px; }
.sheet { margin-top: 31px; background: #fff; }
.zones { font-size: 8.4px; fill: #000; stroke: #000; stroke-width: .15px; text-anchor: middle; }
.fields { font-size: 12.4px; fill: #000; stroke: none; }
.fields .big { font-size: 17.2px; }
.navtools { position: absolute; left: 911px; top: 748px; width: 98px; height: 30px; background: #f0f0f0; }
.sheets { height: 63px; background: #efefef; border-top: 1px solid #c8c8c8; box-sizing: border-box; display: flex; padding: 14px 0 0 14px; gap: 5px; }
.thumb { width: 55px; height: 42px; border: 4px solid #0696d7; box-sizing: border-box; background: #fff; }
.addsheet { width: 55px; height: 42px; background: #f1f1f1; display: flex; align-items: center; justify-content: center; }
.taskbar { height: 58px; box-sizing: border-box; border-top: 1px solid #aeb2c0; background: linear-gradient(90deg, #d6dce9 0%, #d8dae9 25%, #dde1ef 55%, #dcdeed 63%, #e6d8e7 72%, #e3d7e9 84%, #efd8e1 91%, #ead9e4 100%); display: flex; align-items: center; }
.weather { margin-left: 25px; margin-top: -6px; }
.temp { width: 549px; padding-left: 4px; margin-top: 1px; font-family: "Open Sans", sans-serif; font-size: 14.4px; line-height: 20.5px; display: flex; flex-direction: column; color: #1b1b1b; }
.temp em { font-style: normal; color: #5d6067; }
.start { margin-top: 2px; }
.search { margin-left: 18px; width: 273px; height: 39px; box-sizing: border-box; border-radius: 20px; background: #f5f7fc; border: 1px solid #d3d7e3; border-bottom-color: #b9bdca; display: flex; align-items: center; padding: 0 12px 0 12px; font-family: "Open Sans", sans-serif; font-size: 15.9px; color: #505050; margin-top: 1px; }
.search span { margin-left: 11px; }
.gift { margin-left: auto; }
.apps { margin-left: 7px; margin-top: -1px; }
.tray { margin-left: 240px; margin-top: -1px; }
.clock { width: 76px; text-align: right; font-family: "Open Sans", sans-serif; font-size: 14.6px; line-height: 20.3px; margin-top: 1px; display: flex; flex-direction: column; color: #1b1b1b; white-space: nowrap; }
.notif { margin-left: 11px; margin-top: 3px; }
</style>
